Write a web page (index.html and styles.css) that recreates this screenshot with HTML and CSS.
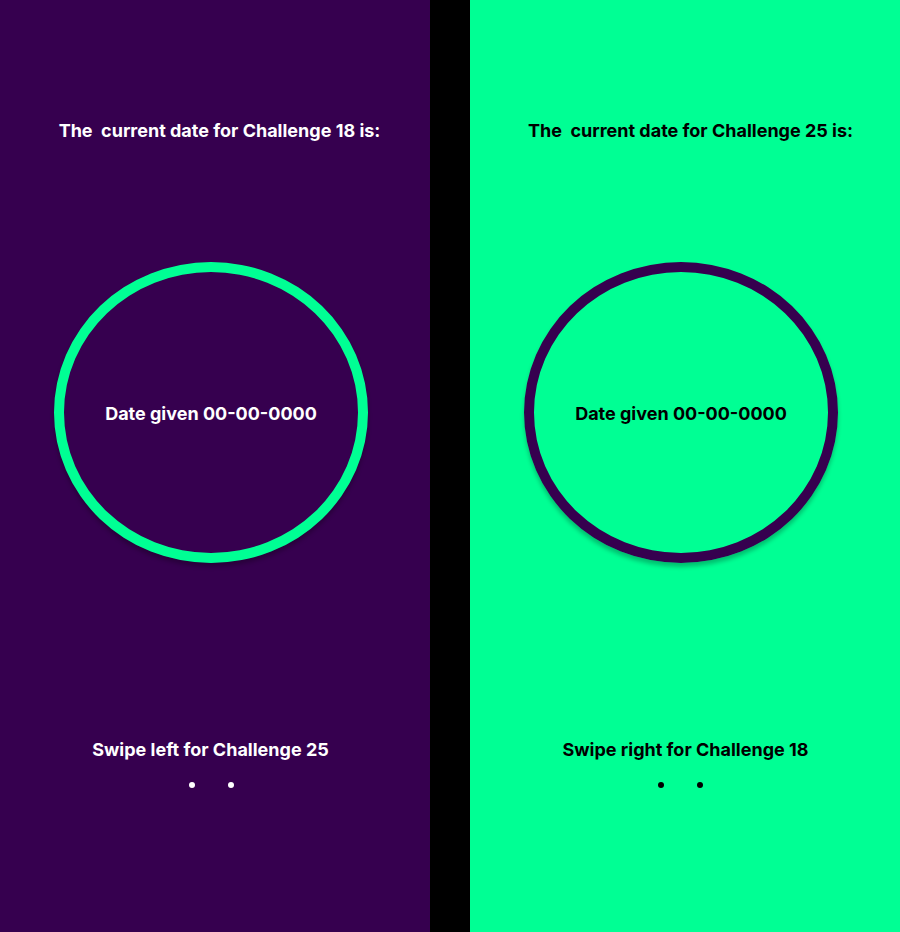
FILE: index.html
```html
<!DOCTYPE html>
<html lang="en">
<head>
<meta charset="utf-8">
<title>Challenges</title>
<link rel="stylesheet" href="styles.css">
</head>
<body>
<main class="screens">
  <section class="panel panel--purple">
    <h1 class="title title--left">The&nbsp; current date for Challenge 18 is:</h1>
    <div class="ring ring--green">
      <p class="ring__text">Date given 00-00-0000</p>
    </div>
    <p class="swipe swipe--left">Swipe left for Challenge 25</p>
    <div class="dots dots--left"><span class="dot"></span><span class="dot"></span></div>
  </section>
  <section class="panel panel--green">
    <h1 class="title title--right">The&nbsp; current date for Challenge 25 is:</h1>
    <div class="ring ring--purple">
      <p class="ring__text">Date given 00-00-0000</p>
    </div>
    <p class="swipe swipe--right">Swipe right for Challenge 18</p>
    <div class="dots dots--right"><span class="dot"></span><span class="dot"></span></div>
  </section>
</main>
</body>
</html>
```

FILE: styles.css
```css
* { box-sizing: border-box; }
html, body { margin: 0; padding: 0; }
body {
  background: #000;
  font-family: Inter, "Noto Sans", sans-serif;
  font-weight: 700;
}
.screens {
  display: flex;
  width: 900px;
  height: 932px;
  gap: 40px;
  background: #000;
}
.panel {
  width: 430px;
  height: 932px;
  display: flex;
  flex-direction: column;
  padding-top: 120px;
}
.panel--purple { background: #36004f; color: #fff; }
.panel--green { background: #00ff94; color: #000; }
.title {
  margin: 0;
  font-size: 18px;
  line-height: 22px;
  font-weight: 700;
  text-align: center;
}
.title--left { padding-left: 9px; }
.title--right { padding-left: 11px; }
.ring {
  margin: 120px 0 0 54px;
  width: 314px;
  height: 301px;
  border-radius: 50%;
  border: 10px solid;
  display: flex;
  align-items: center;
  justify-content: center;
  padding-top: 2px;
  box-shadow: 0 4px 4px rgba(0, 0, 0, 0.25);
}
.ring--green { border-color: #00ff94; }
.ring--purple { border-color: #36004f; }
.ring__text {
  margin: 0;
  font-size: 18px;
  line-height: 22px;
  white-space: nowrap;
}
.swipe {
  margin: 176px 0 0;
  font-size: 18px;
  line-height: 22px;
  text-align: center;
}
.swipe--left { padding-right: 9px; }
.swipe--right { padding-left: 1px; }
.dots {
  display: flex;
  gap: 33px;
  justify-content: center;
  margin-top: 21px;
}
.dots--left { padding-right: 8px; }
.dots--right { padding-right: 9px; }
.dot {
  width: 6px;
  height: 6px;
  border-radius: 50%;
  background: currentColor;
}
```
